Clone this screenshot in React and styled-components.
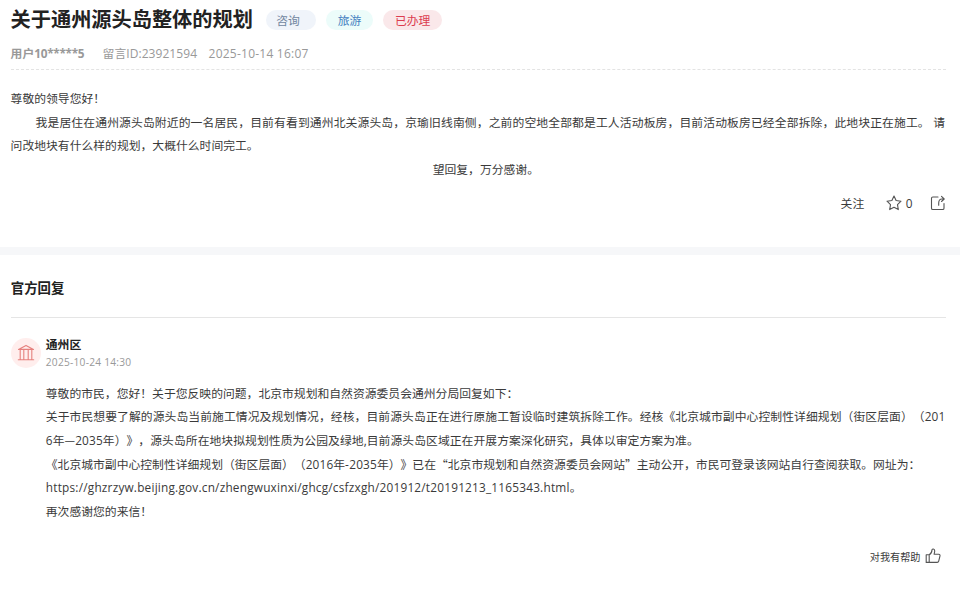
import React from "react";
import styled, { createGlobalStyle } from "styled-components";

const GlobalStyle = createGlobalStyle`
  * { box-sizing: border-box; }
  body {
    margin: 0;
    background: #fff;
    color: #3a3a3a;
    font-family: "Noto Sans CJK SC", sans-serif;
    font-size: 11.82px;
    text-spacing-trim: space-all;
    overflow: hidden;
  }
`;

const Page = styled.main`
  display: flex;
  flex-direction: column;
  width: 960px;
  height: 591px;
  background: #fff;
`;

const Question = styled.section`
  display: flex;
  flex-direction: column;
  height: 247px;
  padding: 0 14px 0 10.6px;
`;

const TitleRow = styled.header`
  display: flex;
  align-items: center;
  height: 40px;
`;

const Title = styled.h1`
  width: 255px;
  margin: 0;
  padding-bottom: 2px;
  color: #222;
  font-size: 20.2px;
  line-height: 30px;
  font-weight: 700;
  white-space: nowrap;
`;

const tones = {
  ask: { color: "#72869f", background: "#f0f4fa" },
  topic: { color: "#4380c0", background: "#ecfcfa" },
  done: { color: "#dc3d50", background: "#fae8ea" },
};

const Tag = styled.span`
  display: flex;
  align-items: center;
  justify-content: center;
  width: ${(p) => p.$width}px;
  height: 20px;
  margin-right: ${(p) => p.$gap || 0}px;
  padding-right: ${(p) => p.$inset || 0}px;
  border-radius: 10px;
  color: ${(p) => tones[p.$tone].color};
  background: ${(p) => tones[p.$tone].background};
  font-size: 11.8px;
  line-height: 20px;
`;

const Meta = styled.div`
  display: flex;
  align-items: center;
  height: 30px;
  padding-bottom: 4px;
  border-bottom: 1px dashed #e3e3e3;
  color: #999;
  font-size: 11.82px;
  white-space: nowrap;
`;

const MetaItem = styled.span`
  width: ${(p) => p.$width}px;
  font-weight: ${(p) => (p.$bold ? 700 : 400)};
`;

const Latin = styled.span`
  font-family: "Open Sans", "Noto Sans CJK SC", sans-serif;
  font-size: ${(p) => p.$size || 11.82}px;
  letter-spacing: ${(p) => p.$track || 0}px;
`;

const Body = styled.div`
  padding-top: 16px;
`;

const Line = styled.p`
  margin: 0;
  height: 23.65px;
  padding-left: ${(p) => p.$indent || 0}px;
  line-height: 23.65px;
  letter-spacing: ${(p) => p.$track || 0}px;
  text-align: ${(p) => p.$align || "left"};
  white-space: pre;
`;

const Actions = styled.div`
  display: flex;
  align-items: center;
  justify-content: flex-end;
  height: 24px;
  margin-top: 10px;
  line-height: 24px;
`;

const Follow = styled.span`
  margin-right: 21.5px;
`;

const Favorite = styled.span`
  display: flex;
  align-items: center;
  gap: 4px;
  margin-right: 17.5px;
`;

const Icon = styled.svg`
  display: block;
  flex: none;
  fill: none;
  stroke: ${(p) => p.$color || "#555"};
  stroke-width: 1.1;
  stroke-linejoin: round;
  stroke-linecap: round;
`;

const Divider = styled.div`
  height: 8px;
  background: #f6f7f9;
`;

const Reply = styled.section`
  display: flex;
  flex-direction: column;
  padding: 0 14px 0 10.8px;
`;

const SectionTitle = styled.h2`
  height: 63px;
  margin: 0;
  border-bottom: 1px solid #e5e5e5;
  color: #222;
  font-size: 13.4px;
  line-height: 65px;
  font-weight: 700;
`;

const Author = styled.div`
  display: flex;
  align-items: center;
  gap: 5px;
  height: 32px;
  margin-top: 19px;
`;

const Avatar = styled.span`
  display: grid;
  place-items: center;
  width: 30px;
  height: 30px;
  border-radius: 50%;
  background: #ffeeed;
`;

const AuthorText = styled.div`
  display: flex;
  flex-direction: column;
`;

const Name = styled.strong`
  color: #222;
  line-height: 17px;
`;

const Time = styled.span`
  color: #999;
  line-height: 17px;
`;

const ReplyBody = styled.div`
  padding: 11.8px 0 0 35px;
`;

const Helpful = styled.div`
  display: flex;
  align-items: center;
  justify-content: flex-end;
  gap: 5px;
  height: 20px;
  margin-top: 23.7px;
  padding-right: 4.6px;
  font-size: 10.15px;
`;

const StarIcon = () => (
  <Icon width="16" height="16" viewBox="0 0 16 16">
    <path d="M8 1.1 10.1 5.5 15 6.2 11.5 9.7 12.3 14.6 8 12.3 3.7 14.6 4.5 9.7 1 6.2 5.9 5.5Z" />
  </Icon>
);

const ShareIcon = () => (
  <Icon width="16" height="16" viewBox="0 0 16 16">
    <path d="M8 2H2.8Q1.5 2 1.5 3.3V13.2Q1.5 14.5 2.8 14.5H12.7Q14 14.5 14 13.2V8.5" />
    <path d="M8.7 10.2V8Q8.7 4 12 4H14M11.5 1.4 14.2 4 11.5 6.5" />
  </Icon>
);

const BankIcon = () => (
  <Icon width="18" height="18" viewBox="0 0 18 18" $color="#e6817e">
    <path d="M1.5 5.4 9 1.4 16.5 5.4ZM1.3 15.8H16.7M3.2 5.8V15.5M6.8 5.8V15.5M11.2 5.8V15.5M14.8 5.8V15.5" />
  </Icon>
);

const ThumbIcon = () => (
  <Icon width="16" height="16" viewBox="0 0 16 16">
    <path d="M4.2 6.8H1.2V14.4H4.2ZM4.2 6.8C6.2 5.8 6.9 4 7 1.9 7.1.6 9.6.7 9.7 2.8 9.8 4 9.3 5.3 9.1 6.2H13.7C14.8 6.2 15.2 7 15 7.9L13.7 13.2C13.5 14 13 14.4 12.2 14.4H4.2" />
  </Icon>
);

export default function App() {
  return (
    <Page>
      <GlobalStyle />
      <Question>
        <TitleRow>
          <Title>关于通州源头岛整体的规划</Title>
          <Tag $tone="ask" $width={50} $gap={10.5} $inset={5}>咨询</Tag>
          <Tag $tone="topic" $width={47} $gap={10}>旅游</Tag>
          <Tag $tone="done" $width={59}>已办理</Tag>
        </TitleRow>
        <Meta>
          <MetaItem $width={92} $bold>用户<Latin $track={-0.3}>10*****5</Latin></MetaItem>
          <MetaItem $width={106}>留言<Latin $size={12} $track={0.07}>ID:23921594</Latin></MetaItem>
          <MetaItem $width={110}><Latin $size={12} $track={0.23}>2025-10-14 16:07</Latin></MetaItem>
        </Meta>
        <Body>
          <Line>尊敬的领导您好！</Line>
          <Line $indent={25} $track={0.11}>我是居住在通州源头岛附近的一名居民，目前有看到通州北关源头岛，京瑜旧线南侧，之前的空地全部都是工人活动板房，目前活动板房已经全部拆除，此地块正在施工。<Latin $track={0.4}> </Latin>请</Line>
          <Line>问改地块有什么样的规划，大概什么时间完工。</Line>
          <Line $align="center" $indent={15}>望回复，万分感谢。</Line>
        </Body>
        <Actions>
          <Follow>关注</Follow>
          <Favorite><StarIcon /><Latin>0</Latin></Favorite>
          <ShareIcon />
        </Actions>
      </Question>
      <Divider />
      <Reply>
        <SectionTitle>官方回复</SectionTitle>
        <Author>
          <Avatar><BankIcon /></Avatar>
          <AuthorText>
            <Name>通州区</Name>
            <Time><Latin $size={10.2} $track={0.23}>2025-10-24 14:30</Latin></Time>
          </AuthorText>
        </Author>
        <ReplyBody>
          <Line>尊敬的市民，您好！关于您反映的问题，北京市规划和自然资源委员会通州分局回复如下：</Line>
          <Line $track={0.065}>关于市民想要了解的源头岛当前施工情况及规划情况，经核，目前源头岛正在进行原施工暂设临时建筑拆除工作。经核《北京城市副中心控制性详细规划（街区层面）（<Latin $track={0.1}>201</Latin></Line>
          <Line $track={0.045}><Latin $track={0.15}>6</Latin>年—<Latin $track={0.15}>2035</Latin>年）》，源头岛所在地块拟规划性质为公园及绿地<Latin>,</Latin>目前源头岛区域正在开展方案深化研究，具体以审定方案为准。</Line>
          <Line>《北京城市副中心控制性详细规划（街区层面）（<Latin $track={0.15}>2016</Latin>年<Latin $track={0.4}>-</Latin><Latin $track={0.15}>2035</Latin>年）》已在“北京市规划和自然资源委员会网站”主动公开，市民可登录该网站自行查阅获取。网址为：</Line>
          <Line><Latin $track={0.21}>https://ghzrzyw.beijing.gov.cn/zhengwuxinxi/ghcg/csfzxgh/201912/t20191213_1165343.html</Latin>。</Line>
          <Line>再次感谢您的来信！</Line>
        </ReplyBody>
        <Helpful>对我有帮助<ThumbIcon /></Helpful>
      </Reply>
    </Page>
  );
}
